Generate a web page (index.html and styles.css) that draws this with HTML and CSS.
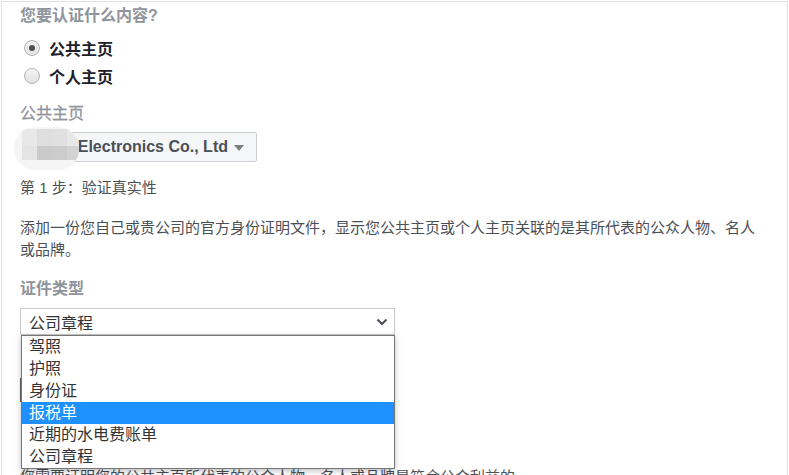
FILE: index.html
```html
<!DOCTYPE html>
<html lang="zh-CN">
<head>
<meta charset="utf-8">
<title>认证</title>
<link rel="stylesheet" href="styles.css">
</head>
<body>
<div class="page">
  <div class="heading h-first">您要认证什么内容?</div>
  <div class="radios">
    <label class="radio-row"><span class="radio checked"></span><span class="radio-label">公共主页</span></label>
    <label class="radio-row"><span class="radio"></span><span class="radio-label">个人主页</span></label>
  </div>
  <div class="heading h-page">公共主页</div>
  <div class="page-btn">
    <span class="btn-text">Electronics Co., Ltd</span>
    <span class="caret"></span>
    <div class="blob">
      <span class="px c1 r1"></span><span class="px c2 r1"></span><span class="px c3 r1"></span><span class="px c4 r1"></span>
      <span class="px c1 r2"></span><span class="px c2 r2"></span><span class="px c3 r2"></span><span class="px c4 r2"></span>
    </div>
  </div>
  <div class="step">第 1 步：验证真实性</div>
  <p class="desc">添加一份您自己或贵公司的官方身份证明文件，显示您公共主页或个人主页关联的是其所代表的公众人物、名人或品牌。</p>
  <div class="heading h-type">证件类型</div>
  <div class="select">
    <span>公司章程</span>
    <svg class="chev" width="12" height="8" viewBox="0 0 12 8"><path d="M1.5 1.5 L6 6 L10.5 1.5" fill="none" stroke="#4b4f56" stroke-width="2"/></svg>
  </div>
  <div class="behind-btn"></div>
  <div class="behind-text">您需要证明您的公共主页所代表的公众人物、名人或品牌是符合公众利益的</div>

  <ul class="options">
    <li>驾照</li>
    <li>护照</li>
    <li>身份证</li>
    <li class="hl">报税单</li>
    <li>近期的水电费账单</li>
    <li>公司章程</li>
  </ul>
</div>
</body>
</html>
```

FILE: styles.css
```css
html, body {
  margin: 0;
  padding: 0;
  background: #fff;
}
body {
  font-family: "Liberation Sans", "Noto Sans CJK SC", sans-serif;
  color: #4b4f56;
}
.page {
  position: relative;
  margin: 1px 0 0 1px;
  width: 787px;
  height: 474px;
  box-sizing: border-box;
  border: 1px solid #e2e2e2;
  border-bottom: none;
  padding: 4px 0 0 18px;
  overflow: hidden;
}
.heading {
  font-size: 16px;
  line-height: 20px;
  color: #90949c;
  font-weight: bold;
}
.h-page {
  margin-top: 14px;
  font-weight: normal;
  -webkit-text-stroke: 0.3px #90949c;
}
.h-type {
  margin-top: 18px;
}
.radios {
  margin-top: 8px;
}
.radio-row {
  display: flex;
  align-items: center;
  height: 28px;
}
.radio {
  box-sizing: border-box;
  width: 16px;
  height: 16px;
  margin-left: 4px;
  border-radius: 50%;
  border: 1px solid #b4b4b4;
  background: linear-gradient(#f4f4f4, #e2e2e2);
  display: flex;
  align-items: center;
  justify-content: center;
}
.radio.checked::after {
  content: "";
  width: 6px;
  height: 6px;
  border-radius: 50%;
  background: #4b4f56;
}
.radio-label {
  margin-left: 9px;
  font-size: 16px;
  font-weight: bold;
  color: #1d2129;
}
.page-btn {
  position: relative;
  margin-top: 8px;
  width: 237px;
  height: 30px;
  box-sizing: border-box;
  border: 1px solid #ccd0d5;
  border-radius: 2px;
  background: #f5f6f7;
  display: flex;
  align-items: center;
  justify-content: flex-end;
  padding-right: 12px;
  gap: 6px;
}
.btn-text {
  font-size: 16px;
  font-weight: bold;
  color: #4b4f56;
  white-space: nowrap;
}
.caret {
  width: 0;
  height: 0;
  border-left: 5px solid transparent;
  border-right: 5px solid transparent;
  border-top: 6px solid #7f7f7f;
  margin-top: 1px;
}
.blob {
  position: absolute;
  left: -7px;
  top: -6px;
  width: 65px;
  height: 43px;
  border-radius: 21px;
  background: #f5f5f5;
  overflow: hidden;
}
.px {
  position: absolute;
  filter: blur(0.4px);
}
.c1 { left: 8px; width: 15px; }
.c2 { left: 23px; width: 15px; }
.c3 { left: 38px; width: 15px; }
.c4 { left: 53px; width: 12px; }
.r1 { top: 2px; height: 17px; }
.r2 { top: 19px; height: 14px; }
.c1.r1 { background: #e8e8e8; }
.c2.r1 { background: #dedede; }
.c3.r1 { background: #e0e0e0; }
.c4.r1 { background: #e8e8e8; }
.c1.r2 { background: #e4e4e4; }
.c2.r2 { background: #cacaca; }
.c3.r2 { background: #cccccc; }
.c4.r2 { background: #d2d2d2; }
.step {
  margin-top: 16px;
  font-size: 15px;
  line-height: 20px;
  color: #4b4f56;
}
.desc {
  margin: 19px 0 0 0;
  padding-right: 20px;
  font-size: 15px;
  line-height: 22px;
  color: #4b4f56;
}
.select {
  margin-top: 9px;
  width: 375px;
  height: 27px;
  box-sizing: border-box;
  border: 1px solid #c9c9c9;
  background: #fff;
  display: flex;
  align-items: center;
  justify-content: space-between;
  padding: 0 6px 0 8px;
  font-size: 16px;
  color: #333;
}
.chev {
  display: block;
}
.behind-btn {
  margin-top: 43px;
  width: 120px;
  height: 24px;
  border-left: 2px solid #666;
  background: #f5f6f7;
}
.behind-text {
  margin-top: 64px;
  font-size: 15px;
  line-height: 22px;
  color: #4b4f56;
  white-space: nowrap;
}
.options {
  position: absolute;
  left: 19px;
  top: 333px;
  width: 374px;
  height: 134px;
  box-sizing: border-box;
  margin: 0;
  padding: 0;
  list-style: none;
  border: 1px solid #767676;
  background: #fff;
  box-shadow: 0 2px 6px rgba(0, 0, 0, 0.25);
}
.options li {
  height: 22px;
  line-height: 22px;
  padding-left: 7px;
  font-size: 16px;
  color: #333;
}
.options li.hl {
  background: #1e90ff;
  color: #fff;
}
```
